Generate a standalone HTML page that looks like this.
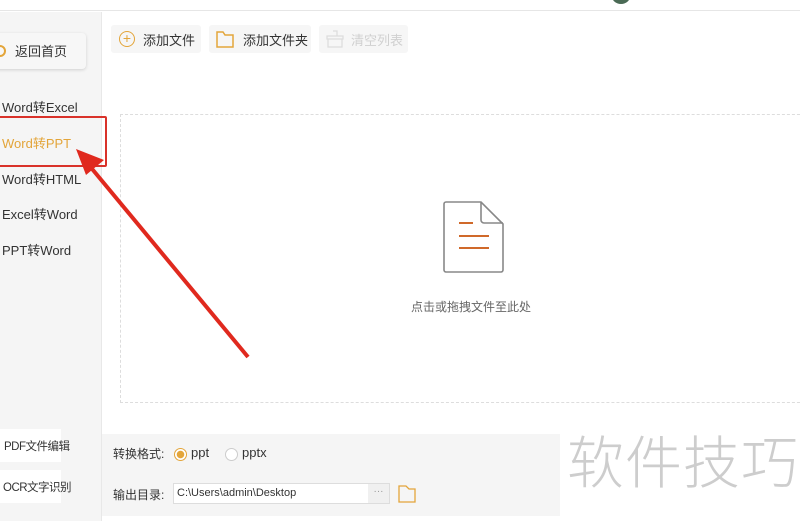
<!DOCTYPE html>
<html><head><meta charset="utf-8"><style>
*{margin:0;padding:0;box-sizing:border-box}
body{width:800px;height:521px;overflow:hidden;background:#fff;font-family:"Liberation Sans","Noto Sans CJK SC",sans-serif;position:relative;font-size:13px;color:#333}
.a{position:absolute;white-space:nowrap}
</style></head><body>
<div class="a" style="left:0;top:0;width:800px;height:11px;background:#fff;border-bottom:1px solid #e6e6e6"></div>
<div class="a" style="left:611px;top:-6px;width:20px;height:10px;border-radius:0 0 10px 10px;background:#4a6a55"></div>
<div class="a" style="left:0;top:12px;width:102px;height:509px;background:#f5f5f5;border-right:1px solid #e8e8e8"></div>
<div class="a" style="left:-10px;top:33px;width:96px;height:36px;background:#f7f7f7;border-radius:4px;box-shadow:0 1px 3px rgba(0,0,0,.15)"></div>
<div class="a" style="left:-6px;top:45px;width:12px;height:12px;border:2px solid #e3a53a;border-radius:50%"></div>
<div class="a" style="left:15px;top:41px;font-size:13px">返回首页</div>
<div class="a" style="left:2px;top:97px">Word转Excel</div>
<div class="a" style="left:2px;top:133px;color:#e3a53a">Word转PPT</div>
<div class="a" style="left:2px;top:169px">Word转HTML</div>
<div class="a" style="left:2px;top:204px">Excel转Word</div>
<div class="a" style="left:2px;top:240px">PPT转Word</div>
<div class="a" style="left:-4px;top:116px;width:111px;height:51px;border:2px solid #d9322a;border-radius:2px"></div>
<div class="a" style="left:0;top:429px;width:61px;height:33px;background:#fff;font-size:11.5px;padding:9px 0 0 4px;letter-spacing:-0.5px">PDF文件编辑</div>
<div class="a" style="left:0;top:470px;width:61px;height:33px;background:#fff;font-size:11.5px;padding:9px 0 0 3px;letter-spacing:-0.5px">OCR文字识别</div>
<div class="a" style="left:111px;top:25px;width:90px;height:28px;background:#f6f6f6;border-radius:3px"></div>
<div class="a" style="left:119px;top:31px;width:16px;height:16px;border:1.5px solid #e3a53a;border-radius:50%;color:#e3a53a;font-size:14px;line-height:12px;text-align:center">+</div>
<div class="a" style="left:143px;top:30px">添加文件</div>
<div class="a" style="left:209px;top:25px;width:102px;height:28px;background:#f6f6f6;border-radius:3px"></div>
<svg class="a" style="left:215px;top:29px" width="20" height="20"><path d="M2 3h6l2 3h8v12H2z" fill="none" stroke="#e3a53a" stroke-width="1.5"/></svg>
<div class="a" style="left:243px;top:30px">添加文件夹</div>
<div class="a" style="left:319px;top:25px;width:89px;height:28px;background:#f6f6f6;border-radius:3px"></div>
<svg class="a" style="left:325px;top:30px" width="20" height="18"><path d="M8 1h4v5M2 6h16v3H2zM3 9v8h14V9" fill="none" stroke="#ddd" stroke-width="1.3"/></svg>
<div class="a" style="left:351px;top:30px;color:#d0d0d0">清空列表</div>
<div class="a" style="left:120px;top:114px;width:700px;height:289px;border:1px dashed #ddd"></div>
<svg class="a" style="left:441px;top:200px" width="64" height="74"><path d="M5 2h35l22 22v46a2 2 0 0 1-2 2H5a2 2 0 0 1-2-2V4a2 2 0 0 1 2-2z" fill="#fff" stroke="#888" stroke-width="1.6"/><path d="M40 2v18a3 3 0 0 0 3 3h19" fill="none" stroke="#888" stroke-width="1.6"/><path d="M18 23h14M18 36h30M18 48h30" stroke="#d0692a" stroke-width="2"/></svg>
<div class="a" style="left:411px;top:298px;font-size:12px;color:#666">点击或拖拽文件至此处</div>
<div class="a" style="left:102px;top:434px;width:458px;height:82px;background:#f5f5f5"></div>
<div class="a" style="left:113px;top:445px;font-size:12px">转换格式:</div>
<div class="a" style="left:174px;top:448px;width:13px;height:13px;border:1px solid #e3a53a;border-radius:50%;background:radial-gradient(#e3a53a 3.5px,#fff 4px)"></div>
<div class="a" style="left:191px;top:445px">ppt</div>
<div class="a" style="left:225px;top:448px;width:13px;height:13px;border:1px solid #ccc;border-radius:50%;background:#fff"></div>
<div class="a" style="left:242px;top:445px">pptx</div>
<div class="a" style="left:113px;top:486px;font-size:12px">输出目录:</div>
<div class="a" style="left:173px;top:483px;width:217px;height:21px;border:1px solid #ddd;background:#fff;font-size:11px;padding:3px 0 0 3px">C:\Users\admin\Desktop</div>
<div class="a" style="left:368px;top:484px;width:21px;height:19px;background:#f0f0f0;color:#999;font-size:10px;text-align:center;line-height:15px">···</div>
<svg class="a" style="left:397px;top:484px" width="20" height="20"><path d="M2 2h7l3 3h6v13H2z" fill="none" stroke="#e3a53a" stroke-width="1.3"/></svg>
<div class="a" style="left:567px;top:418px;font-size:57px;color:#cdcdcd;font-family:'Noto Sans CJK SC',sans-serif;font-weight:300;letter-spacing:1px">软件技巧</div>
<svg class="a" style="left:0;top:0" width="800" height="521"><line x1="248" y1="357" x2="88" y2="164" stroke="#e0291e" stroke-width="4"/><polygon points="76,149 104,160 86,175" fill="#e0291e"/></svg>
</body></html>
